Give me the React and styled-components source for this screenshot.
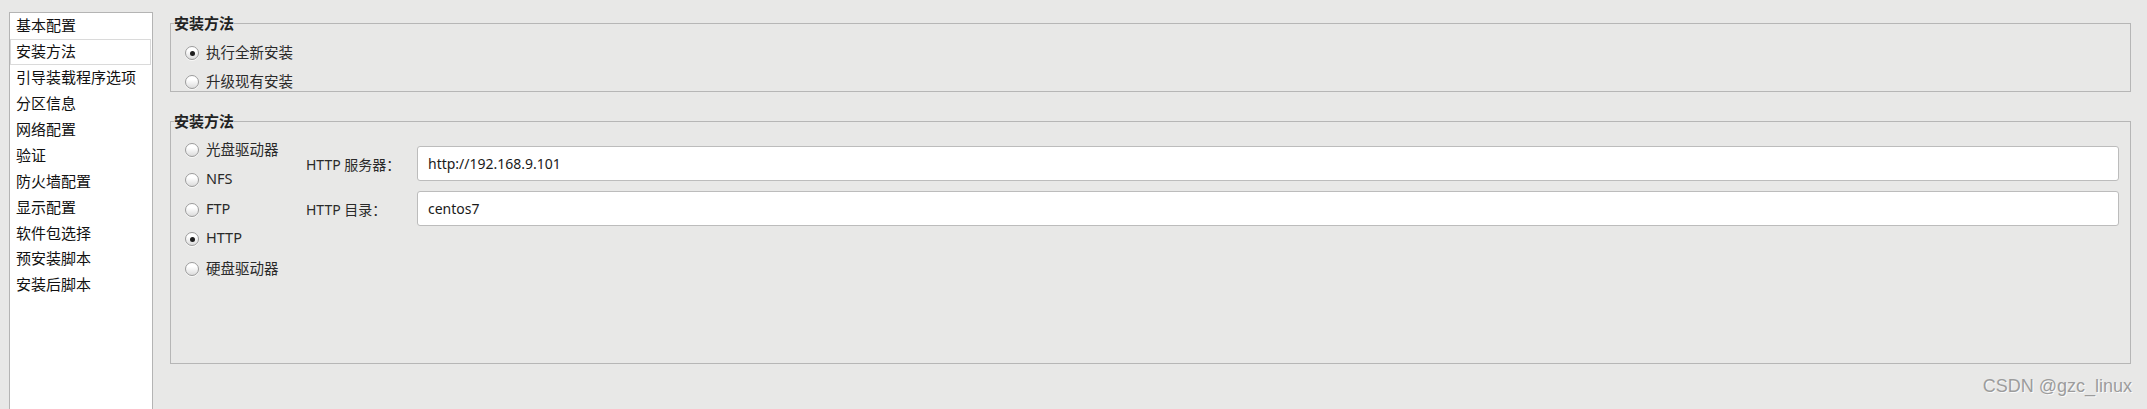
import React from "react"
import styled, { createGlobalStyle } from "styled-components"

const GlobalStyle = createGlobalStyle`
  html, body {
    margin: 0;
    padding: 0;
    background: #e8e8e7;
    overflow: hidden;
  }
  body {
    font-family: "Noto Sans", "Noto Sans CJK SC", sans-serif;
    font-size: 14px;
    color: #2a2a2a;
  }
`

const Page = styled.div`
  display: flex;
  align-items: flex-start;
  padding: 12px 16px 0 9px;
  height: 409px;
  box-sizing: border-box;
  overflow: hidden;
`

const Sidebar = styled.ul`
  list-style: none;
  margin: 0;
  padding: 0;
  width: 144px;
  height: 400px;
  flex: none;
  box-sizing: border-box;
  background: #fff;
  border: 1px solid #b4b4b4;
  border-bottom: none;
`

const NavItem = styled.li`
  height: 25.9px;
  box-sizing: border-box;
  margin: 0 1px 0 0;
  padding: 0 0 2px 5px;
  display: flex;
  align-items: center;
  font-size: 15px;
  color: #111;
  border: 1px solid ${(p) => (p.$active ? "#dadada" : "transparent")};
`

const Main = styled.div`
  flex: 1;
  margin-left: 17px;
  padding-top: 2px;
  display: flex;
  flex-direction: column;
`

const Group = styled.fieldset`
  margin: 0;
  padding: 0;
  border: 1px solid #b6b6b6;
  min-width: 0;
  & + & {
    margin-top: 20px;
  }
`

const Legend = styled.legend`
  margin-left: 3px;
  padding: 0;
  font-size: 15px;
  font-weight: bold;
  line-height: 18px;
  color: #222;
`

const RadioList = styled.div`
  display: flex;
  flex-direction: column;
  gap: ${(p) => p.$gap}px;
  padding: ${(p) => p.$top}px 0 0 14px;
`

const RadioRow = styled.label`
  display: flex;
  align-items: center;
  height: 22px;
  gap: 7px;
  font-size: 14.5px;
  white-space: nowrap;
`

const RadioDot = styled.span`
  width: 14px;
  height: 14px;
  margin-top: 4px;
  box-sizing: border-box;
  border-radius: 50%;
  border: 1px solid #9c9c9c;
  background: linear-gradient(#ffffff 30%, #dcdcdc);
  box-shadow: 0 1px 0 rgba(255, 255, 255, 0.7);
  display: flex;
  align-items: center;
  justify-content: center;
  flex: none;

  &::after {
    content: "";
    width: 5px;
    height: 5px;
    border-radius: 50%;
    background: ${(p) => (p.$checked ? "#1e1e1e" : "transparent")};
  }
`

const SourceBody = styled.div`
  display: grid;
  grid-template-columns: 135px 1fr;
  min-height: 233px;
  padding-right: 11px;
`

const Form = styled.div`
  display: grid;
  grid-template-columns: 111px 1fr;
  row-gap: 10px;
  align-items: center;
  align-content: start;
  padding-top: 16px;
`

const FieldLabel = styled.span`
  white-space: nowrap;
`

const TextInput = styled.input`
  height: 35px;
  box-sizing: border-box;
  border: 1px solid #bcbcbc;
  border-radius: 3px;
  background: #fff;
  padding: 0 10px;
  font-family: "Noto Sans", "Noto Sans CJK SC", sans-serif;
  font-size: 14px;
  color: #1a1a1a;
  outline: none;
`

const Watermark = styled.div`
  align-self: flex-end;
  margin-top: 11px;
  margin-right: -1px;
  font-family: "Liberation Sans", Arial, sans-serif;
  font-size: 18px;
  line-height: 22px;
  color: #9c9c9c;
  text-shadow: 1px 1px 0 #fafafa;
`

const navItems = [
  "基本配置",
  "安装方法",
  "引导装载程序选项",
  "分区信息",
  "网络配置",
  "验证",
  "防火墙配置",
  "显示配置",
  "软件包选择",
  "预安装脚本",
  "安装后脚本",
]

const sources = ["光盘驱动器", "NFS", "FTP", "HTTP", "硬盘驱动器"]

function Radio({ label, checked }) {
  return (
    <RadioRow>
      <RadioDot $checked={checked} />
      {label}
    </RadioRow>
  )
}

export default function App() {
  return (
    <>
      <GlobalStyle />
      <Page>
        <Sidebar>
          {navItems.map((item) => (
            <NavItem key={item} $active={item === "安装方法"}>
              {item}
            </NavItem>
          ))}
        </Sidebar>
        <Main>
          <Group>
            <Legend>安装方法</Legend>
            <RadioList $gap={7} $top={8}>
              <Radio label="执行全新安装" checked />
              <Radio label="升级现有安装" />
            </RadioList>
          </Group>
          <Group>
            <Legend>安装方法</Legend>
            <SourceBody>
              <RadioList $gap={7.75} $top={7}>
                {sources.map((s) => (
                  <Radio key={s} label={s} checked={s === "HTTP"} />
                ))}
              </RadioList>
              <Form>
                <FieldLabel>HTTP 服务器：</FieldLabel>
                <TextInput defaultValue="http://192.168.9.101" />
                <FieldLabel>HTTP 目录：</FieldLabel>
                <TextInput defaultValue="centos7" />
              </Form>
            </SourceBody>
          </Group>
          <Watermark>CSDN @gzc_linux</Watermark>
        </Main>
      </Page>
    </>
  )
}
